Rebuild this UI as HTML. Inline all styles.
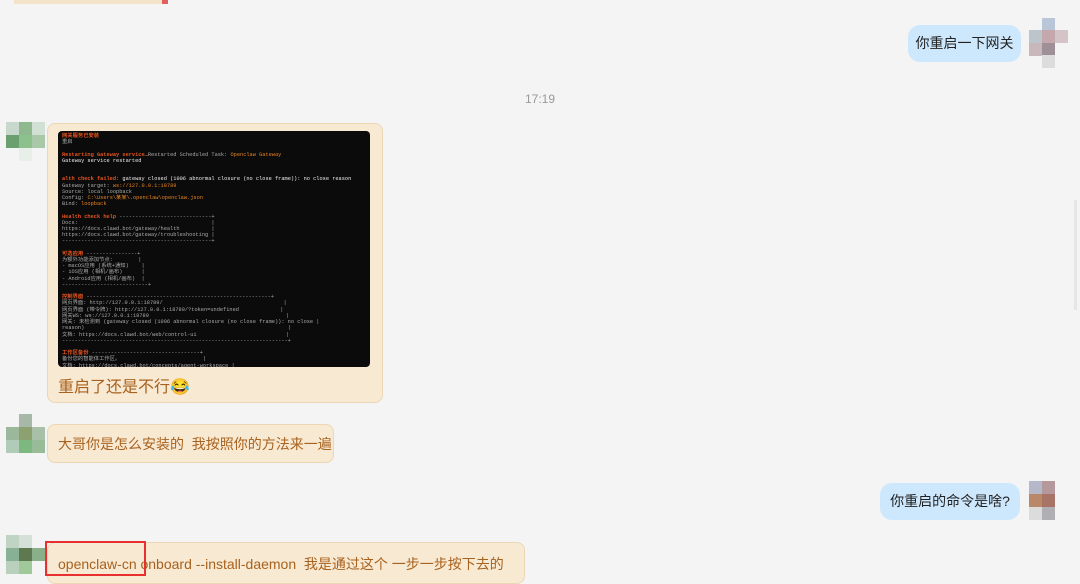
<!DOCTYPE html>
<html><head><meta charset="utf-8"><style>
body{margin:0;width:1080px;height:575px;background:#f4f4f4;position:relative;overflow:hidden;font-family:"Liberation Sans","Noto Sans CJK SC",sans-serif}
.a{position:absolute}
.px{position:absolute;width:13px;height:13px}
.bl{position:absolute;background:#f8e9d2;border:1px solid #ecd7b4;border-radius:8px;color:#a8621f;font-size:14px;white-space:nowrap}
.br{position:absolute;background:#cde8fd;border-radius:12px;color:#222;font-size:14px;text-align:center;white-space:nowrap}
.term{position:absolute;left:58px;top:131px;width:312px;height:236px;background:#0b0b0b;border-radius:4px;overflow:hidden;font-family:"Liberation Mono","Noto Sans CJK SC",monospace;font-size:5.3px;line-height:6.2px;color:#aaa;white-space:pre;padding:2px 0 0 4px;box-sizing:border-box}
.o{color:#e8541f;font-weight:bold}.y{color:#e8841f}.w{color:#eee}
</style></head><body>
<div class="a" style="left:14px;top:0;width:150px;height:4px;background:#f3e3c8"></div>
<div class="a" style="left:162px;top:0;width:6px;height:4px;background:#e06060"></div>
<div class="px" style="left:1042px;top:18px;background:#b9c6d8"></div>
<div class="px" style="left:1029px;top:30px;background:#bcc4cc"></div><div class="px" style="left:1042px;top:30px;background:#c4a8ad"></div><div class="px" style="left:1055px;top:30px;background:#d4c4c8"></div>
<div class="px" style="left:1029px;top:43px;background:#c8b8bc"></div><div class="px" style="left:1042px;top:43px;background:#9e9096"></div>
<div class="px" style="left:1042px;top:55px;background:#dcdcdc"></div>
<div class="br" style="left:908px;top:25px;width:113px;height:37px;line-height:37px">你重启一下网关</div>
<div class="a" style="left:0;top:92px;width:1080px;text-align:center;font-size:12px;color:#999">17:19</div>
<div class="px" style="left:6px;top:122px;background:#c8d8cc"></div><div class="px" style="left:19px;top:122px;background:#8fb88f"></div><div class="px" style="left:32px;top:122px;background:#d0e0d4"></div>
<div class="px" style="left:6px;top:135px;background:#6aa070"></div><div class="px" style="left:19px;top:135px;background:#8cc08c"></div><div class="px" style="left:32px;top:135px;background:#a8c8a8"></div>
<div class="px" style="left:19px;top:148px;background:#e8eee8"></div>
<div class="bl" style="left:47px;top:123px;width:334px;height:278px">
<div style="position:absolute;left:10px;top:249px;font-size:16px">重启了还是不行😂</div></div>
<div class="term"><span class="o">网关服务已安装</span>
重启

<span class="o">Restarting Gateway service…</span>Restarted Scheduled Task: <span class="y">Openclaw Gateway</span>
<span class="w">Gateway service restarted</span>


<span class="o">alth check failed:</span> <span class="w">gateway closed (1006 abnormal closure (no close frame)): no close reason</span>
Gateway target: <span class="y">ws://127.0.0.1:18789</span>
Source: local loopback
Config: <span class="y">C:\Users\某某\.openclaw\openclaw.json</span>
Bind: <span class="y">loopback</span>

<span class="o">Health check help</span> -----------------------------+
Docs:                                          |
https://docs.clawd.bot/gateway/health          |
https://docs.clawd.bot/gateway/troubleshooting |
-----------------------------------------------+

<span class="o">可选应用</span> ----------------+
为额外功能添加节点:        |
- macOS应用 (系统+通知)    |
- iOS应用 (相机/画布)      |
- Android应用 (相机/画布)  |
---------------------------+

<span class="o">控制界面</span> ----------------------------------------------------------+
网页界面: http://127.0.0.1:18789/                                      |
网页界面 (带令牌): http://127.0.0.1:18789/?token=undefined             |
网关WS: ws://127.0.0.1:18789                                           |
网关: 未检测到 (gateway closed (1006 abnormal closure (no close frame)): no close |
reason)                                                                |
文档: https://docs.clawd.bot/web/control-ui                            |
-----------------------------------------------------------------------+

<span class="o">工作区备份</span> ----------------------------------+
备份您的智能体工作区。                          |
文档: https://docs.clawd.bot/concepts/agent-workspace |</div>
<div class="px" style="left:19px;top:414px;background:#a8b8a8"></div>
<div class="px" style="left:6px;top:427px;background:#9cb89c"></div><div class="px" style="left:19px;top:427px;background:#8ca070"></div><div class="px" style="left:32px;top:427px;background:#a8c0a8"></div>
<div class="px" style="left:6px;top:440px;background:#b0ccb8"></div><div class="px" style="left:19px;top:440px;background:#7cb880"></div><div class="px" style="left:32px;top:440px;background:#98bc98"></div>
<div class="bl" style="left:47px;top:424px;width:285px;height:37px"><div style="position:absolute;left:10px;top:9px">大哥你是怎么安装的&nbsp; 我按照你的方法来一遍</div></div>
<div class="px" style="left:1029px;top:481px;background:#b4b8c8"></div><div class="px" style="left:1042px;top:481px;background:#b4989c"></div>
<div class="px" style="left:1029px;top:494px;background:#b88868"></div><div class="px" style="left:1042px;top:494px;background:#a87468"></div>
<div class="px" style="left:1029px;top:507px;background:#dcdcdc"></div><div class="px" style="left:1042px;top:507px;background:#b0b0b4"></div>
<div class="br" style="left:880px;top:483px;width:140px;height:37px;line-height:37px">你重启的命令是啥?</div>
<div class="px" style="left:6px;top:535px;background:#c0d4c4"></div><div class="px" style="left:19px;top:535px;background:#d4e0d8"></div>
<div class="px" style="left:6px;top:548px;background:#88b094"></div><div class="px" style="left:19px;top:548px;background:#5e7850"></div><div class="px" style="left:32px;top:548px;background:#8ab08a"></div>
<div class="px" style="left:6px;top:561px;background:#b8d0bc"></div><div class="px" style="left:19px;top:561px;background:#a0c898"></div>
<div class="bl" style="left:47px;top:542px;width:476px;height:40px"><div style="position:absolute;left:10px;top:11px">openclaw-cn onboard --install-daemon&nbsp; 我是通过这个 一步一步按下去的</div></div>
<div class="a" style="left:45px;top:541px;width:97px;height:31px;border:2px solid #e83030"></div>
<div class="a" style="left:1074px;top:200px;width:3px;height:110px;background:#e6e6e6"></div>
</body></html>
